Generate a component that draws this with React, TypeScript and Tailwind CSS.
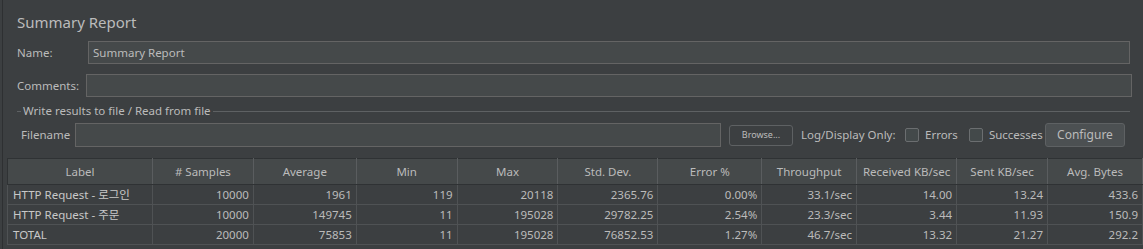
import React from "react";

const font = { fontFamily: '"Noto Sans", "Noto Sans CJK KR", sans-serif' };

const columns = [
  { label: "Label", width: 145 },
  { label: "# Samples", width: 101 },
  { label: "Average", width: 103 },
  { label: "Min", width: 101 },
  { label: "Max", width: 101 },
  { label: "Std. Dev.", width: 100 },
  { label: "Error %", width: 104 },
  { label: "Throughput", width: 95 },
  { label: "Received KB/sec", width: 100 },
  { label: "Sent KB/sec", width: 91 },
  { label: "Avg. Bytes", width: 95 },
];

const rows = [
  ["HTTP Request - 로그인", "10000", "1961", "119", "20118", "2365.76", "0.00%", "33.1/sec", "14.00", "13.24", "433.6"],
  ["HTTP Request - 주문", "10000", "149745", "11", "195028", "29782.25", "2.54%", "23.3/sec", "3.44", "11.93", "150.9"],
  ["TOTAL", "20000", "75853", "11", "195028", "76852.53", "1.27%", "46.7/sec", "13.32", "21.27", "292.2"],
];

function Checkbox({ label }: { label: string }) {
  return (
    <label className="flex items-center gap-[6px] whitespace-nowrap">
      <span className="w-[14px] h-[14px] rounded-[2px] border border-[#6b6e70] bg-[#43494a]" />
      <span>{label}</span>
    </label>
  );
}

export default function App() {
  return (
    <div
      className="w-[1143px] h-[249px] overflow-hidden bg-[#3c3f41] pl-[2px] text-[11.5px] text-[#bbbbbb]"
      style={font}
    >
      <div className="h-full border-l border-[#2e3032]">
        {/* Title */}
        <div className="h-[41px] pl-[14px] pt-[12px] text-[15px] leading-[20px]">Summary Report</div>

        {/* Name */}
        <div className="flex items-center h-[23px] pl-[14px] pr-[13px]">
          <span className="w-[71px]">Name:</span>
          <div className="flex-1 h-full flex items-center px-[4px] bg-[#45494a] border border-[#646464]">
            Summary Report
          </div>
        </div>

        {/* Comments */}
        <div className="flex items-center h-[23px] mt-[10px] pl-[14px] pr-[11px]">
          <span className="w-[69px]">Comments:</span>
          <div className="flex-1 h-full bg-[#45494a] border border-[#646464]" />
        </div>

        {/* File section */}
        <div className="mt-[6px] pl-[14px] pr-[13px]">
          <div className="flex items-center h-[16px]">
            <div className="w-[4px] h-px bg-[#5e6163]" />
            <span className="px-[2px]">Write results to file / Read from file</span>
            <div className="flex-1 h-px bg-[#5e6163]" />
          </div>
          <div className="flex items-center h-[24px] mt-[4px] pl-[4px] pr-[5px] whitespace-nowrap">
            <span className="w-[54px]">Filename</span>
            <div className="w-[646px] h-full bg-[#45494a] border border-[#646464]" />
            <button className="ml-[8px] w-[64px] h-[21px] rounded-[3px] border border-[#5e6163] bg-[#3c3f41] text-[9px] text-[#bbbbbb]">
              Browse...
            </button>
            <span className="ml-[8px] w-[104px]">Log/Display Only:</span>
            <Checkbox label="Errors" />
            <div className="w-[11px]" />
            <Checkbox label="Successes" />
            <button className="ml-auto w-[80px] h-[24px] rounded-[3px] border border-[#5e6163] bg-[#4c5052] text-[12px] text-[#bbbbbb]">
              Configure
            </button>
          </div>
        </div>

        {/* Table */}
        <div className="mt-[11px] ml-[4px]">
          <table className="table-fixed border-collapse">
            <colgroup>
              {columns.map((c) => (
                <col key={c.label} style={{ width: c.width }} />
              ))}
            </colgroup>
            <thead>
              <tr className="h-[26px] bg-[#45494a]">
                {columns.map((c) => (
                  <th key={c.label} className="font-normal text-center whitespace-nowrap border border-[#2f3234] border-l-[#5a5d5f] border-r-[#5a5d5f] first:border-l-[#2f3234]">
                    {c.label}
                  </th>
                ))}
              </tr>
            </thead>
            <tbody>
              {rows.map((r) => (
                <tr key={r[0]} className="h-[20px]">
                  {r.map((v, i) => (
                    <td
                      key={i}
                      className={
                        i === 0
                          ? "px-[5px] text-left text-[#c8c8c8] border border-[#4f5254] whitespace-nowrap"
                          : "px-[4px] text-right border border-[#4f5254]"
                      }
                    >
                      {v}
                    </td>
                  ))}
                </tr>
              ))}
            </tbody>
          </table>
        </div>
      </div>
    </div>
  );
}
